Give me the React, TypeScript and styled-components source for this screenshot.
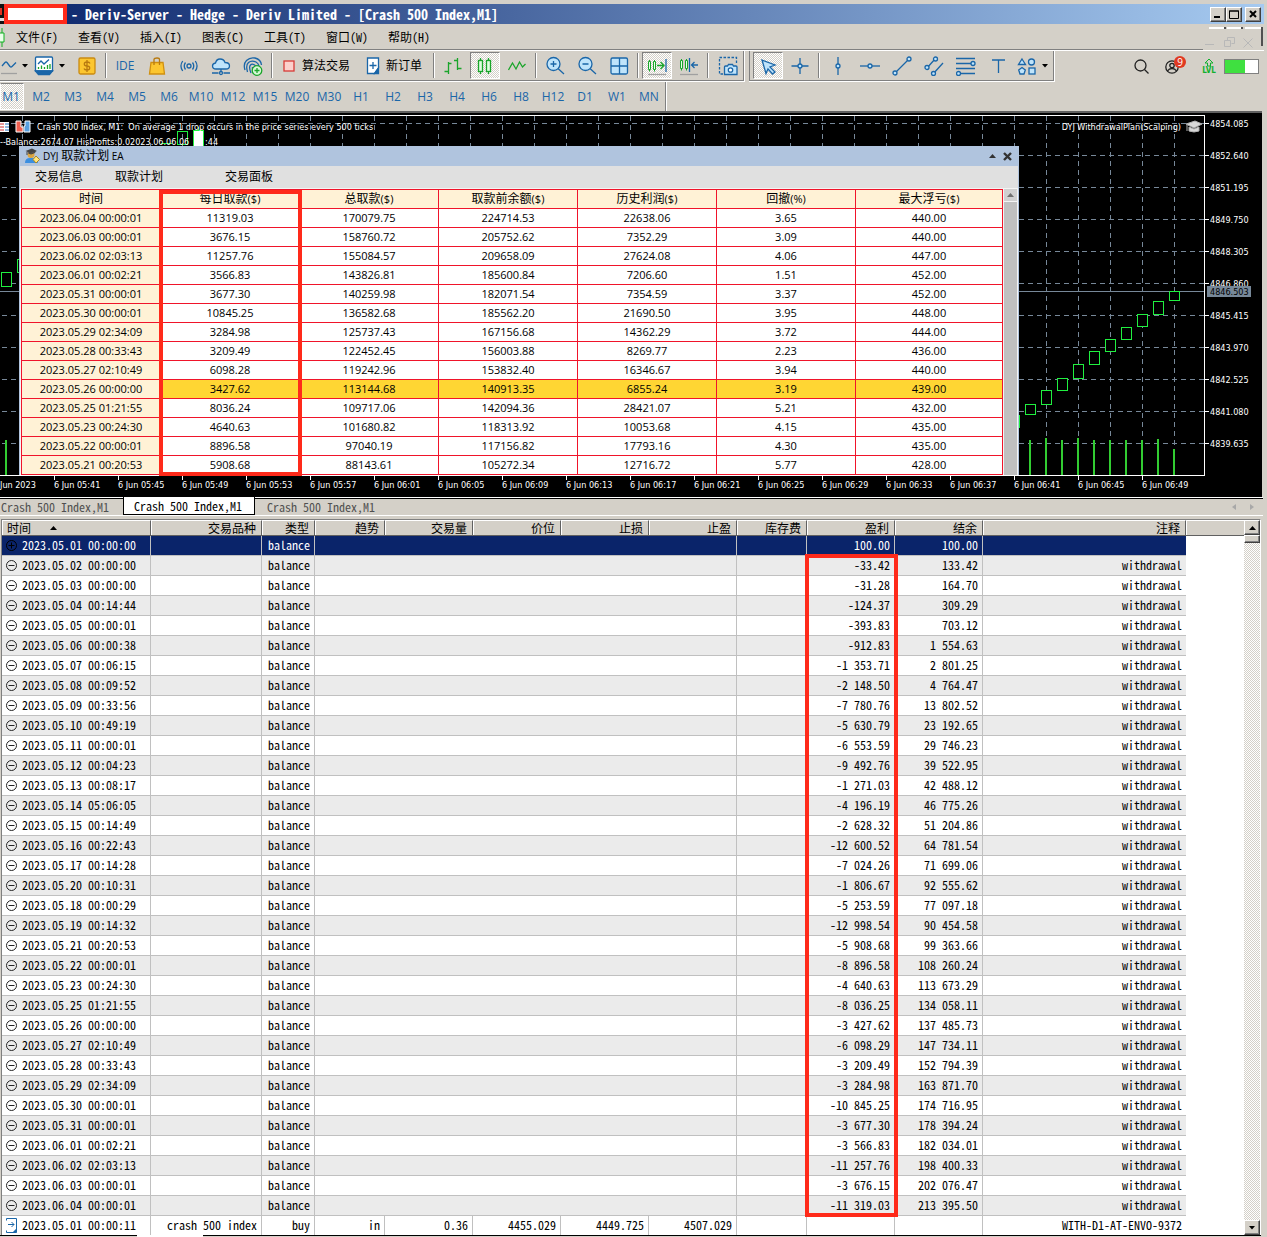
import React from "react";
import styled, { createGlobalStyle, css } from "styled-components";

const face = "#d4d0c8";
const navy = "#0a246a";
const blue = "#1a66a8";
const sky = "#bfe4fb";
const green = "#1aa52a";
const lime = "#20f040";
const slate = "#778899";
const alarm = "#ff2a1a";
const mono = `"Noto Sans Mono CJK SC", "Liberation Mono", "Noto Sans CJK SC", monospace`;
const sans = `"Open Sans", "Noto Sans CJK SC", sans-serif`;
const checker = css`
  background: repeating-conic-gradient(#ffffff 0% 25%, ${face} 0% 50%) 0 0 / 2px 2px;
`;

const GlobalStyle = createGlobalStyle`
  body { margin: 0; background: ${face}; }
  *, *::before, *::after { box-sizing: border-box; }
  button { border: 0; margin: 0; padding: 0; background: none; font: inherit; color: inherit; }
  svg { display: block; flex: none; }
`;

const Window = styled.div`
  padding: 4px 3px 0 0;
  font: 12px/16px ${mono};
  color: #000;
  overflow: hidden;
`;

/* ---------- title bar ---------- */
const TitleBar = styled.header`
  display: flex;
  align-items: center;
  height: 20px;
  background: linear-gradient(90deg, ${navy}, #a6caf0);
  color: #fff;
  padding-right: 3px;
`;
const AccountMask = styled.span`
  width: 63px;
  height: 20px;
  margin-right: 4px;
  border: 4px solid ${alarm};
  background: #fff;
`;
const Title = styled.h1`
  flex: 1;
  margin: 0;
  font: bold 14px/20px ${mono};
  white-space: pre;
`;
const Bevel = styled.button<{ $gap?: boolean }>`
  display: flex;
  align-items: center;
  justify-content: center;
  width: 16px;
  height: 15px;
  margin-left: ${(p) => (p.$gap ? 3 : 0)}px;
  background: ${face};
  border: 1px solid;
  border-color: #fff #404040 #404040 #fff;
  box-shadow: inset -1px -1px #808080;
`;

/* ---------- menu ---------- */
const MenuBar = styled.nav`
  display: flex;
  align-items: center;
  gap: 20px;
  height: 27px;
  border-bottom: 1px solid #fff;
  box-shadow: inset 0 -1px #808080;
`;
const MenuIcon = styled.span`
  width: 5px;
  margin-right: -9px;
`;
const MenuItem = styled.button`
  width: 42px;
  white-space: nowrap;
`;
const ChildControls = styled.div`
  display: flex;
  flex-direction: column;
  align-self: stretch;
  width: 61px;
  margin-left: auto;
  padding-top: 3px;
  background: ${face};
`;
const ChildButtons = styled.div`
  display: flex;
  align-items: flex-end;
  justify-content: space-between;
  width: 50px;
  height: 20px;
  margin-top: -18px;
  padding-left: 2px;
`;

/* ---------- toolbars ---------- */
const ToolRow = styled.div`
  display: flex;
  align-items: center;
  height: 31px;
`;
const Band = styled.div<{ $first?: boolean }>`
  display: flex;
  align-items: center;
  height: 31px;
  border-bottom: 1px solid #fff;
  border-right: 1px solid #fff;
  box-shadow: inset -1px -1px #808080${(p) => (p.$first ? "" : ", inset 1px 0 #808080")};
  padding: 0 ${(p) => (p.$first ? 0 : 2)}px 1px ${(p) => (p.$first ? 0 : 3)}px;
  margin-left: ${(p) => (p.$first ? 0 : 4)}px;
`;
const Tool = styled.button<{ $w?: number; $on?: boolean }>`
  display: flex;
  align-items: center;
  justify-content: center;
  gap: 5px;
  width: ${(p) => p.$w ?? 32}px;
  height: 27px;
  color: ${blue};
  font: 12px/16px ${sans};
  ${(p) =>
    p.$on &&
    css`
      width: 30px;
      margin: 0 1px;
      border: 1px solid;
      border-color: #808080 #fff #fff #808080;
      ${checker}
    `}
`;
const TextTool = styled(Tool)`
  color: #000;
  gap: 6px;
`;
const Split = styled.i`
  width: 2px;
  height: 25px;
  margin: 0 2px;
  border-left: 1px solid #808080;
  border-right: 1px solid #fff;
`;
const Status = styled.div`
  display: flex;
  align-items: center;
  gap: 16px;
  margin-left: auto;
  padding-right: 5px;
`;
const Account = styled.button`
  position: relative;
`;
const Count = styled.b`
  position: absolute;
  left: 9px;
  top: -4px;
  width: 12px;
  height: 12px;
  border-radius: 6px;
  background: #e03a22;
  color: #fff;
  font: 10px/12px ${sans};
  text-align: center;
`;
const Battery = styled.span`
  width: 35px;
  height: 15px;
  margin-left: -8px;
  border: 1px solid #808080;
  background: linear-gradient(90deg, #3fe040 20px, #fff 20px);
`;
const Level = styled.button`
  color: #12b030;
  margin-left: 7px;
  font: bold 8px/8px "DejaVu Sans Condensed", sans-serif;
`;
const Frames = styled.div`
  display: flex;
  align-items: center;
  align-self: flex-start;
  width: 666px;
  height: 29px;
  box-shadow: inset -1px 0 #808080, 1px 0 #fff;
`;
const Frame = styled.button<{ $on?: boolean }>`
  width: 32px;
  height: 27px;
  color: ${blue};
  font: 12px/26px ${sans};
  text-align: center;
  ${(p) =>
    p.$on &&
    css`
      width: 24px;
      margin-right: 1px;
      padding-right: 2px;
      border: 1px solid;
      border-color: #808080 #fff #fff #fff;
      ${checker}
    `}
`;

/* ---------- chart ---------- */
const ChartFrame = styled.section`
  position: relative;
  display: flex;
  height: 386px;
  margin-right: 2px;
  border-top: 2px solid #606060;
  background: #000;
  font-family: "DejaVu Sans Condensed", "DejaVu Sans", sans-serif;
  font-size: 9px;
  overflow: hidden;
`;
const Plot = styled.svg`
  flex: 1 1 0;
  min-width: 0;
  height: 384px;
  font-size: 9px;
`;
const PriceAxis = styled.svg`
  width: 57px;
  height: 384px;
  font-size: 9px;
`;

const Panel = styled.div`
  position: absolute;
  left: 19px;
  top: 33px;
  width: 1000px;
  height: 329px;
  background: #f4f4f4;
  border: 0 solid #b0c4de;
  border-width: 0 1px;
  font: 11px/18px ${sans};
  color: #000;
  overflow: hidden;
`;
const PanelTitle = styled.div`
  display: flex;
  align-items: center;
  height: 20px;
  padding: 0 6px 0 4px;
  gap: 3px;
  background: #b0c4de;
  font: 10px/20px ${sans};
`;
const Han = styled.span`
  font-size: 12px;
`;
const PanelButtons = styled.span`
  display: flex;
  align-items: center;
  gap: 7px;
  margin-left: auto;
`;
const PanelTabs = styled.div`
  display: flex;
  height: 22px;
  padding-left: 15px;
  background: #e0e0e0;
  font-size: 12px;
  line-height: 20px;
`;
const PanelTab = styled.button<{ $w: number }>`
  width: ${(p) => p.$w}px;
  text-align: left;
`;
const PanelBody = styled.div`
  display: flex;
  gap: 1px;
  padding: 1px 1px 0 1px;
`;
const Plan = styled.table`
  flex: 1;
  table-layout: fixed;
  border-collapse: collapse;
  background: #fff;
  th, td {
    height: 19px;
    padding: 0;
    border: 1px solid #f0142a;
    text-align: center;
    line-height: 16px;
  }
  th {
    background: #fff2d6;
    font-weight: normal;
    font-size: 11px;
  }
  thead th {
    font-size: 12px;
    small { font-size: 11px; }
  }
`;
const PlanRow = styled.tr<{ $hot: boolean }>`
  td { background: ${(p) => (p.$hot ? "#ffd633" : "#fff")}; }
`;
const PanelScroll = styled.div`
  width: 13px;
  background: #c0c0c0;
`;
const PanelScrollUp = styled.button`
  display: flex;
  align-items: center;
  justify-content: center;
  width: 13px;
  height: 13px;
  background: #d0d0d0;
  border-bottom: 1px solid #f4f4f4;
`;
const Marker = styled.div<{ $x: number; $y: number; $w: number; $h: number }>`
  position: absolute;
  left: ${(p) => p.$x}px;
  top: ${(p) => p.$y}px;
  width: ${(p) => p.$w}px;
  height: ${(p) => p.$h}px;
  border: 4px solid ${alarm};
  pointer-events: none;
`;

/* ---------- chart tabs ---------- */
const TabStrip = styled.div`
  display: flex;
  height: 19px;
  margin-right: 1px;
  border-bottom: 1px solid #fff;
  background: linear-gradient(#fff 1px, #000 1px, #000 2px, ${face} 2px);
`;
const ChartTab = styled.button<{ $on?: boolean }>`
  height: 18px;
  width: ${(p) => (p.$on ? 132 : 123)}px;
  padding-left: ${(p) => (p.$on ? 10 : 1)}px;
  text-align: left;
  line-height: 20px;
  color: #505050;
  ${(p) =>
    p.$on &&
    css`
      background: #fff;
      color: #000;
      border: 1px solid #000;
      border-top: 0;
      line-height: 18px;
      & + button { padding-left: 12px; }
    `}
`;
const TabArrows = styled.span`
  margin: 6px 7px 0 auto;
`;

/* ---------- history list ---------- */
const ListFrame = styled.section`
  position: relative;
  display: flex;
  margin: 3px 3px 0 1px;
  border-top: 1px solid #808080;
  border-left: 1px solid #808080;
  border-right: 1px solid #fff;
  background: #fff;
`;
const History = styled.table`
  flex: 1;
  min-width: 0;
  table-layout: fixed;
  border-collapse: separate;
  border-spacing: 0;
`;
const HeadCell = styled.th<{ $left?: boolean }>`
  height: 16px;
  padding: ${(p) => (p.$left ? "0 0 0 5px" : "0 5px 0 0")};
  background: ${face};
  border-top: 1px solid #fff;
  border-right: 1px solid #606060;
  border-bottom: 1px solid #606060;
  box-shadow: inset 1px 0 #fff;
  font-weight: normal;
  line-height: 14px;
  text-align: ${(p) => (p.$left ? "left" : "right")};
  &:last-child { border-right: 0; }
`;
const SortMark = styled.svg`
  display: inline-block;
  margin: 0 0 3px 19px;
`;
const Row = styled.tr<{ $tone: "selected" | "odd" | "even" | "last" }>`
  color: ${(p) => (p.$tone === "selected" ? "#fff" : "#000")};
  td {
    height: ${(p) => (p.$tone === "last" ? 19 : 20)}px;
    padding: 0 4px 2px 0;
    text-align: right;
    white-space: pre;
    line-height: 16px;
    background: ${(p) => (p.$tone === "selected" ? navy : p.$tone === "odd" ? "#ebebeb" : "#fff")};
    border-right: 1px solid #c0c0c0;
    border-bottom: ${(p) => (p.$tone === "last" ? 0 : 1)}px solid #c0c0c0;
  }
  td:nth-last-child(2) { border-right: 0; }
  td:last-child { background: #fff; border: 0; }
`;
const Stamp = styled.div`
  display: flex;
  align-items: center;
  gap: 5px;
  height: 16px;
  padding-left: 4px;
  svg { margin-top: 2px; }
`;
const ScrollBar = styled.div`
  display: flex;
  flex-direction: column;
  justify-content: space-between;
  width: 16px;
  ${checker}
`;
const Thumb = styled(Bevel)`
  height: 8px;
`;
const BottomStrip = styled.footer`
  display: flex;
  height: 2px;
  margin-right: 3px;
  border-top: 1px solid #000;
`;
const BottomTab = styled.span`
  width: 66px;
  height: 2px;
  margin: -1px 0 0 137px;
  background: #fff;
`;

/* ---------- drawings ---------- */
const Svg = ({ w = 20, h = 20, children, c = blue }: { w?: number; h?: number; c?: string; children: React.ReactNode }) => (
  <svg width={w} height={h} viewBox={`0 0 ${w} ${h}`} fill="none" stroke={c} strokeWidth="1.3" aria-hidden="true">
    {children}
  </svg>
);
const Caret = ({ c = "#000", up = false }: { c?: string; up?: boolean }) => (
  <svg width="7" height="4" viewBox="0 0 7 4" aria-hidden="true">
    <path d={up ? "M0 4 3.5 0 7 4z" : "M0 0h6L3 3.500z"} fill={c} />
  </svg>
);

const icons: Record<string, React.ReactNode> = {
  line: <Svg w={16} h={20}><path d="M1 10l3-3.500q1-1 2 0l3 4q1 1 2 0l4-4" /><path d="M0 17.500h16" stroke="#a0a0a0" /></Svg>,
  area: (
    <Svg>
      <path d="M2.500 1h15q1 0 1 1v13h-17V2q0-1 1-1z" fill="#fff" />
      <path d="M1.500 15l3 3.500h11l3-3.500z" fill={blue} />
      <path d="M4 8l3-3 3 3 5-4.500" />
      <path d="M4.500 13v-2M7.500 13V9.500M10.500 13v-2M13.500 13V9M16 13V8" stroke={green} />
    </Svg>
  ),
  dollar: (
    <Svg>
      <rect x="2" y="2" width="16" height="16" rx="1.500" fill="#fcc62f" stroke="#c98a12" />
      <path d="M13 7.500q-.5-1.500-3-1.500-2.700 0-2.700 2t2.700 2 2.700 2-2.700 2q-2.500 0-3-1.500M10 4v12" stroke="#b87a10" />
    </Svg>
  ),
  bag: (
    <Svg>
      <path d="M4 6.500h12l1.500 11.500h-15z" fill="#fcc62f" stroke="#d09010" />
      <path d="M7 9V3.500q0-1.500 3-1.500 2.500 0 2.500 1.500V9" stroke="#b87a10" />
    </Svg>
  ),
  signal: (
    <Svg>
      <circle cx="10" cy="10" r="2" />
      <path d="M6.500 6.500q-2.500 3.500 0 7M13.500 6.500q2.500 3.500 0 7M3.700 5q-3.500 5 0 10M16.300 5q3.500 5 0 10" />
    </Svg>
  ),
  cloud: (
    <Svg>
      <path d="M5 13q-3.500 0-3.500-3 0-2.500 3-3Q5.500 3 9 3q4 0 5 3.500 4.500 0 4.500 3.500 0 3-3.500 3z" fill={sky} />
      <path d="M10 13v3M1 17h6.500M12.500 17H19" /><circle cx="10" cy="17" r="1.500" />
    </Svg>
  ),
  finger: (
    <Svg>
      <path d="M2 14Q0 8 3.500 4.500T12 2q6 1.500 6.500 7M4.500 16Q2.500 9 5.500 6.500T13 6q2.500 1.500 3 4M8 17Q5.500 11 7.500 9T13 10M11 17q-2-3-1.500-6" />
      <circle cx="14" cy="14.500" r="4.800" fill="#d8f8d8" stroke={green} /><path d="M14 12v5M11.500 14.500h5" stroke={green} />
    </Svg>
  ),
  stop: <Svg w={14} h={14}><rect x="2" y="2" width="10" height="10" fill="#fcd0cc" stroke="#d83a36" /></Svg>,
  order: (
    <Svg w={14} h={18}>
      <path d="M1.500 1h11v10l-4 5.500h-7z" fill="#fff" /><path d="M12.500 11v5.500h-4z" fill={blue} /><path d="M7 5v7M3.500 8.500h7" />
    </Svg>
  ),
  bars: <Svg c={green}><path d="M5.500 6v12M1.500 15.500h4M5.500 7.500h3M14.500 2v12M11 4.500h3.500M14.500 12.500h4" /></Svg>,
  candles: <Svg c={green}><rect x="3.500" y="4.500" width="4" height="11" fill="#dfffe0" /><rect x="11.500" y="4.500" width="4" height="11" fill="#dfffe0" /><path d="M5.500 2v2.500M5.500 15.500V18M13.500 2v2.500M13.500 15.500V18" /></Svg>,
  zigzag: <Svg c={green}><path d="M1.500 14l4-7 3.500 6 3.500-7 3 5 3-3" /></Svg>,
  zoomIn: <Svg><circle cx="8.500" cy="8" r="6.500" fill={sky} /><path d="M13 12.500l6 5.500M5.500 8h6M8.500 5v6" /></Svg>,
  zoomOut: <Svg><circle cx="8.500" cy="8" r="6.500" fill={sky} /><path d="M13 12.500l6 5.500M5.500 8h6" /></Svg>,
  tiles: <Svg><rect x="2" y="2" width="16.500" height="16" rx="1.500" fill={sky} /><path d="M10.500 2v16M2 10h16.500" /></Svg>,
  scroll: (
    <Svg>
      <g stroke={green} strokeWidth="1"><path d="M1.500 5.500h2v8h-2zM6.500 5.500h2v8h-2zM2.500 4v1.500M2.500 13.500v2M7.500 4v1.500M7.500 13.500v2" fill="#eaffea" /><path d="M10 9.500h7M13.500 6l3.500 3.500-3.500 3.500" strokeWidth="1.300" /></g>
      <path d="M19 3v13" /><path d="M1 18.500h18" stroke="#a0a0a0" />
    </Svg>
  ),
  shift: (
    <Svg>
      <g stroke={green} strokeWidth="1"><path d="M1.500 4.500h2v8h-2zM6.500 4.500h2v8h-2zM2.500 3v1.500M2.500 12.500v2M7.500 3v1.500M7.500 12.500v2" fill="#eaffea" /></g>
      <path d="M10.500 2v14M19 9h-6M15.500 6l-3 3 3 3" /><path d="M1 18.500h18" stroke="#a0a0a0" />
    </Svg>
  ),
  camera: (
    <Svg>
      <path d="M5 18H1.500V1.500h17V7" strokeDasharray="2.500 1.500" />
      <path d="M6.500 18.500v-7.500q0-1 1-1h2l1-1.500h4l1 1.500h2.500q1 0 1 1v7.500z" fill={sky} /><circle cx="12.500" cy="14" r="2.200" fill="#fff" />
    </Svg>
  ),
  cursor: <Svg><path d="M4 4l13 5-5 2 5 5-2.500 2-4.500-5-2 4.500z" fill={sky} /></Svg>,
  cross: <Svg><path d="M10 2v16M1.500 10h17" /><circle cx="10" cy="10" r="2" fill={sky} /></Svg>,
  vline: <Svg><path d="M10 1v18" /><circle cx="10" cy="10" r="2" fill={sky} /></Svg>,
  hline: <Svg><path d="M0 10h20" /><circle cx="10" cy="10" r="2" fill={sky} /></Svg>,
  trend: <Svg><path d="M3 17L17 3" /><circle cx="3" cy="17" r="2" fill={sky} /><circle cx="17" cy="3" r="2" fill={sky} /></Svg>,
  channel: <Svg><path d="M3 12l8-9M9 18L19 7" /><circle cx="3" cy="11.500" r="2" fill={sky} /><circle cx="11.500" cy="3" r="2" fill={sky} /><circle cx="9.500" cy="17.500" r="2" fill={sky} /></Svg>,
  fib: <Svg><path d="M0 2.500h19M0 7.500h17M0 12.500h19M3 17.500h16" /><circle cx="17" cy="7.500" r="2" fill={sky} /><circle cx="2.500" cy="17.500" r="2" fill={sky} /></Svg>,
  text: <Svg><path d="M4 4h13M10.500 4v13" /></Svg>,
  shapes: (
    <Svg>
      <path d="M5 3l3.500 5.500h-7z" fill={sky} /><circle cx="14.500" cy="6" r="3" fill={sky} /><path d="M5 11.500l3.300 2.500-1.300 4H3l-1.300-4z" fill={sky} /><rect x="12" y="12" width="6" height="6" fill={sky} />
    </Svg>
  ),
};

const T = ({ n, label, on, w, drop, c }: { n?: string; label: string; on?: boolean; w?: number; drop?: boolean; c?: string }) => (
  <Tool aria-label={label} aria-pressed={on} $on={on} $w={w}>
    {n ? icons[n] : c}
    {drop && <Caret />}
  </Tool>
);

const menus = [["文件", "F"], ["查看", "V"], ["插入", "I"], ["图表", "C"], ["工具", "T"], ["窗口", "W"], ["帮助", "H"]];
const frames = "M1 M2 M3 M4 M5 M6 M10 M12 M15 M20 M30 H1 H2 H3 H4 H6 H8 H12 D1 W1 MN".split(" ");

const planHead: [string, string][] = [["时间", ""], ["每日取款", "($)"], ["总取款", "($)"], ["取款前余额", "($)"], ["历史利润", "($)"], ["回撤", "(%)"], ["最大浮亏", "($)"]];
const plan = `2023.06.04 00:00:01|11319.03|170079.75|224714.53|22638.06|3.65|440.00
2023.06.03 00:00:01|3676.15|158760.72|205752.62|7352.29|3.09|440.00
2023.06.02 02:03:13|11257.76|155084.57|209658.09|27624.08|4.06|447.00
2023.06.01 00:02:21|3566.83|143826.81|185600.84|7206.60|1.51|452.00
2023.05.31 00:00:01|3677.30|140259.98|182071.54|7354.59|3.37|452.00
2023.05.30 00:00:01|10845.25|136582.68|185562.20|21690.50|3.95|448.00
2023.05.29 02:34:09|3284.98|125737.43|167156.68|14362.29|3.72|444.00
2023.05.28 00:33:43|3209.49|122452.45|156003.88|8269.77|2.23|436.00
2023.05.27 02:10:49|6098.28|119242.96|153832.40|16346.67|3.94|440.00
2023.05.26 00:00:00|3427.62|113144.68|140913.35|6855.24|3.19|439.00
2023.05.25 01:21:55|8036.24|109717.06|142094.36|28421.07|5.21|432.00
2023.05.23 00:24:30|4640.63|101680.82|118313.92|10053.68|4.15|435.00
2023.05.22 00:00:01|8896.58|97040.19|117156.82|17793.16|4.30|435.00
2023.05.21 00:20:53|5908.68|88143.61|105272.34|12716.72|5.77|428.00`.split("\n").map((r) => r.split("|"));

const deals = `05.01 00:00:00|100.00|100.00
05.02 00:00:00|-33.42|133.42
05.03 00:00:00|-31.28|164.70
05.04 00:14:44|-124.37|309.29
05.05 00:00:01|-393.83|703.12
05.06 00:00:38|-912.83|1 554.63
05.07 00:06:15|-1 353.71|2 801.25
05.08 00:09:52|-2 148.50|4 764.47
05.09 00:33:56|-7 780.76|13 802.52
05.10 00:49:19|-5 630.79|23 192.65
05.11 00:00:01|-6 553.59|29 746.23
05.12 00:04:23|-9 492.76|39 522.95
05.13 00:08:17|-1 271.03|42 488.12
05.14 05:06:05|-4 196.19|46 775.26
05.15 00:14:49|-2 628.32|51 204.86
05.16 00:22:43|-12 600.52|64 781.54
05.17 00:14:28|-7 024.26|71 699.06
05.20 00:10:31|-1 806.67|92 555.62
05.18 00:00:29|-5 253.59|77 097.18
05.19 00:14:32|-12 998.54|90 454.58
05.21 00:20:53|-5 908.68|99 363.66
05.22 00:00:01|-8 896.58|108 260.24
05.23 00:24:30|-4 640.63|113 673.29
05.25 01:21:55|-8 036.25|134 058.11
05.26 00:00:00|-3 427.62|137 485.73
05.27 02:10:49|-6 098.29|147 734.11
05.28 00:33:43|-3 209.49|152 794.39
05.29 02:34:09|-3 284.98|163 871.70
05.30 00:00:01|-10 845.25|174 716.95
05.31 00:00:01|-3 677.30|178 394.24
06.01 00:02:21|-3 566.83|182 034.01
06.02 02:03:13|-11 257.76|198 400.33
06.03 00:00:01|-3 676.15|202 076.47
06.04 00:00:01|-11 319.03|213 395.50`.split("\n").map((r) => r.split("|"));

const columns: [string, number | undefined][] = [["时间", 149], ["交易品种", 111], ["类型", 53], ["趋势", 70], ["交易量", 88], ["价位", 88], ["止损", 88], ["止盈", 88], ["库存费", 70], ["盈利", 88], ["结余", 88], ["注释", undefined], ["", 58]];

const prices = ["4854.085", "4852.640", "4851.195", "4849.750", "4848.305", "4846.860", "4845.415", "4843.970", "4842.525", "4841.080", "4839.635"];
const times = ["05:41", "05:45", "05:49", "05:53", "05:57", "06:01", "06:05", "06:09", "06:13", "06:17", "06:21", "06:25", "06:29", "06:33", "06:37", "06:41", "06:45", "06:49"];
const candles = [[404, 11], [390, 15], [378, 13], [364, 15], [351, 14], [339, 13], [327, 13], [314, 13], [301, 14], [291, 10]];
const volumes = [440, 438, 440, 438, 440, 440, 440, 440, 439, 449];

const Chart = () => (
  <ChartFrame>
    <Plot aria-label="Crash 500 Index, M1">
      <g transform="translate(0 -113)" shapeRendering="crispEdges" fill="none">
        <g stroke={slate} strokeDasharray="5 4">
          {prices.map((p, i) => <line key={p} x1="2" x2="100%" y1={123.5 + i * 32} y2={123.5 + i * 32} />)}
          {Array.from({ length: 37 }, (_, i) => <line key={i} x1={22.5 + i * 32} x2={22.5 + i * 32} y1="116" y2="475" />)}
        </g>
        <path d="M0 291.500h1204" stroke={slate} />
        <g stroke={lime}>
          <rect x="1.500" y="272.500" width="10" height="14" fill="#000" />
          <path d="M19 259.500h-1.500v13H19M161 143.500h11M198.500 127v4M1019.500 415v13" />
          <rect x="177.500" y="131.500" width="10" height="13" />
          <rect x="193.500" y="130.500" width="10" height="17" fill="#fff" />
          {candles.map(([y, h], i) => <rect key={y} x={1025.5 + i * 16} y={y + 0.5} width="10" height={h - 1} fill="#000" />)}
        </g>
        <g fill="#32cd32">
          <rect x="5" y="440" width="2" height="35" />
          {volumes.map((y, i) => <rect key={i} x={1029 + i * 16} y={y} width="2" height={475 - y} />)}
        </g>
        <path d="M0 115.500h1205M0 475.500h1205M1204.500 115v361" stroke="#fff" />
        {times.map((t, i) => <path key={t} d={`M${54.5 + i * 64} 476v4`} stroke="#fff" />)}
      </g>
      <g transform="translate(0 -113)" fill="#fff">
        <text x="0" y="488">Jun 2023</text>
        {times.map((t, i) => <text key={t} x={54 + i * 64} y="488">6 Jun {t}</text>)}
        <text x="37" y="130" xmlSpace="preserve">Crash 500 Index, M1:  On average 1 drop occurs in the price series every 500 ticks</text>
        <text x="0" y="145">--Balance:2674.07 HisProfits:0.02023.06.06 06</text>
        <text x="205" y="145">:44</text>
        <text x="1181" y="130" textAnchor="end">DYJ WithdrawalPlan(Scalping)</text>
        <rect x="0" y="122" width="9" height="10" />
        <path d="M0 124h4M0 127h4M0 130h4" stroke="#d03030" />
        <path d="M5 124h4M5 127h4M5 130h4" stroke="#2070c0" />
        <path d="M16 121h5v6h2v5h-7z" fill="#f06050" stroke="#fff" />
        <path d="M25 121h5v11h-6v-6h1z" fill="#58a0e0" stroke="#fff" />
        <path d="M1186 124l9-3 7 3-8 4zM1189 127l5 2 5-2v4q-5 2-10 0zM1187 125v6" fill="#d8d8d8" stroke="#b0b0b0" />
      </g>
    </Plot>
    <PriceAxis aria-label="Price scale">
      <g transform="translate(-1205 -113)" fill="#fff">
        {prices.map((p, i) => (
          <g key={p}>
            <rect x="1205" y={123 + i * 32} width="4" height="1" />
            <text x="1210" y={127 + i * 32}>{p}</text>
          </g>
        ))}
        <rect x="1207" y="286" width="44" height="11" fill={slate} />
        <text x="1210" y="295" fill="#000">4846.503</text>
      </g>
    </PriceAxis>
    <Panel>
      <PanelTitle>
        <svg width="16" height="16" viewBox="0 0 16 16" aria-hidden="true">
          <path d="M1 15q0-5 5-5h3q5 0 5 5z" fill="#3b8fe0" />
          <circle cx="7" cy="6.500" r="3.500" fill="#d9a441" />
          <path d="M1.500 3L8 .5 13 3 7 5.500z" fill="#444" /><path d="M3 4v3M4.500 5l2.500 1 4-1.500V3z" stroke="#444" fill="#555" />
          <path d="M12 8l3.500 3.500L12 15l-3-3.500z" fill="#ffe680" stroke="#b08820" />
        </svg>
        <span>DYJ <Han>取款计划</Han> EA</span>
        <PanelButtons>
          <button aria-label="收起"><Caret up c="#333" /></button>
          <button aria-label="关闭">
            <svg width="9" height="9" viewBox="0 0 9 9" aria-hidden="true"><path d="M1 1l7 7M8 1L1 8" stroke="#333" strokeWidth="2.400" /></svg>
          </button>
        </PanelButtons>
      </PanelTitle>
      <PanelTabs>
        <PanelTab $w={80}>交易信息</PanelTab>
        <PanelTab $w={110}>取款计划</PanelTab>
        <PanelTab $w={60}>交易面板</PanelTab>
      </PanelTabs>
      <PanelBody>
        <Plan>
          <colgroup>{planHead.map(([h], i) => <col key={h} width={i < 6 ? 139 : undefined} />)}</colgroup>
          <thead><tr>{planHead.map(([h, u]) => <th key={h} scope="col">{h}<small>{u}</small></th>)}</tr></thead>
          <tbody>
            {plan.map(([d, ...rest]) => (
              <PlanRow key={d} $hot={d.startsWith("2023.05.26")}>
                <th scope="row">{d}</th>
                {rest.map((v, i) => <td key={i}>{v}</td>)}
              </PlanRow>
            ))}
          </tbody>
        </Plan>
        <PanelScroll><PanelScrollUp aria-label="向上滚动"><Caret up c="#707070" /></PanelScrollUp></PanelScroll>
      </PanelBody>
    </Panel>
    <Marker $x={159} $y={77} $w={143} $h={286} />
  </ChartFrame>
);

const EntryIcon = ({ kind }: { kind: "plus" | "minus" | "deal" }) =>
  kind === "deal" ? (
    <svg width="11" height="15" viewBox="0 0 11 15" fill="none" stroke={blue} aria-hidden="true">
      <path d="M.5 2.500v-2h10v11l-3 3h-7v-2M2 6.500h6M5.500 4L8 6.500 5.500 9" /><path d="M7 14.500l3.500-3.500v3.500z" fill={blue} />
    </svg>
  ) : (
    <svg width="11" height="11" viewBox="0 0 11 11" fill="none" stroke={kind === "plus" ? "#000" : "#222"} aria-hidden="true">
      <circle cx="5.500" cy="5.500" r="5" /><path d={kind === "plus" ? "M2.500 5.500h6M5.500 2.500v6" : "M2.500 5.500h6"} />
    </svg>
  );

const HistoryList = () => (
  <ListFrame>
    <History>
      <colgroup>{columns.map(([c, w]) => <col key={c} width={w} />)}</colgroup>
      <thead>
        <tr>
          {columns.map(([c], i) => (
            <HeadCell key={c} scope="col" $left={i === 0}>
              {c}
              {i === 0 && <SortMark width="7" height="4" viewBox="0 0 7 4" aria-hidden="true"><path d="M0 4L3.500 0 7 4z" /></SortMark>}
            </HeadCell>
          ))}
        </tr>
      </thead>
      <tbody>
        {deals.map(([d, profit, total], i) => (
          <Row key={d} $tone={i === 0 ? "selected" : i % 2 ? "odd" : "even"}>
            <td><Stamp><EntryIcon kind={i ? "minus" : "plus"} />2023.{d}</Stamp></td>
            <td />
            <td>balance</td>
            <td colSpan={5} />
            <td />
            <td>{profit}</td>
            <td>{total}</td>
            <td>{i ? "withdrawal" : ""}</td>
            <td />
          </Row>
        ))}
        <Row $tone="last">
          <td><Stamp><EntryIcon kind="deal" />2023.05.01 00:00:11</Stamp></td>
          <td>crash 500 index</td>
          <td>buy</td>
          <td>in</td>
          <td>0.36</td>
          <td>4455.029</td>
          <td>4449.725</td>
          <td>4507.029</td>
          <td /><td /><td />
          <td>WITH-D1-AT-ENVO-9372</td>
          <td />
        </Row>
      </tbody>
    </History>
    <ScrollBar>
      <div>
        <Bevel aria-label="向上滚动"><Caret up /></Bevel>
        <Thumb aria-label="滚动块" />
      </div>
      <Bevel aria-label="向下滚动"><Caret /></Bevel>
    </ScrollBar>
    <Marker $x={803} $y={34} $w={93} $h={663} />
  </ListFrame>
);

export default function App() {
  return (
    <Window>
      <GlobalStyle />
      <TitleBar>
        <svg width="4" height="20" viewBox="0 0 4 20" aria-hidden="true"><path d="M0 0h4v20H0z" fill="#111" /><path d="M0 4h2v7H0z" fill="#e03020" /><path d="M0 14h4v3H0z" fill="#ddd" /></svg>
        <AccountMask />
        <Title>- Deriv-Server - Hedge - Deriv Limited - [Crash 500 Index,M1]</Title>
        <Bevel aria-label="最小化"><svg width="10" height="9" viewBox="0 0 10 9"><path d="M1 6h6v2H1z" /></svg></Bevel>
        <Bevel aria-label="最大化"><svg width="10" height="9" viewBox="0 0 10 9"><path d="M.5 1h9v7.500h-9zM0 1h10" fill="none" stroke="#000" /></svg></Bevel>
        <Bevel $gap aria-label="关闭"><svg width="8" height="8" viewBox="0 0 8 8"><path d="M1 1l6 6M7 1L1 7" stroke="#000" strokeWidth="2" /></svg></Bevel>
      </TitleBar>
      <MenuBar>
        <MenuIcon><svg width="5" height="19" viewBox="0 0 5 19" fill="none" stroke="#10b020"><path d="M2 0v19" /><path d="M-2 5h6v9h-6z" fill="#eaffea" /></svg></MenuIcon>
        {menus.map(([m, k]) => <MenuItem key={k}>{m}({k})</MenuItem>)}
        <ChildControls>
          <svg width="61" height="19" viewBox="0 0 61 19" fill="none" strokeWidth="2" shapeRendering="crispEdges" aria-hidden="true">
            <path d="M6 1h15M24 1h14M42 1h16" stroke="#fff" />
            <path d="M21 1h2M38 1h2M59 0v19" stroke="#505050" />
          </svg>
          <ChildButtons>
            <button aria-label="最小化图表"><svg width="10" height="4" stroke="#b8b8b8"><path d="M0 .5h9" /></svg></button>
            <button aria-label="还原图表"><svg width="11" height="11" stroke="#b8b8b8" fill="none"><path d="M3.500 3.500v-3h7v6h-3M.5 3.500h6v6h-6z" /></svg></button>
            <button aria-label="关闭图表"><svg width="10" height="10" stroke="#b8b8b8"><path d="M.5.5l9 9M9.500.5l-9 9" /></svg></button>
          </ChildButtons>
        </ChildControls>
      </MenuBar>
      <ToolRow>
        <Band $first>
          <T n="line" label="线" w={29} drop />
          <T n="area" label="图表类型" w={42} drop />
          <T n="dollar" label="报价" />
          <Split />
          <T label="IDE" c="IDE" />
          <T n="bag" label="市场" />
          <T n="signal" label="信号" />
          <T n="cloud" label="VPS" />
          <T n="finger" label="指纹" />
          <Split />
          <TextTool $w={82}>{icons.stop}算法交易</TextTool>
          <TextTool $w={74}>{icons.order}新订单</TextTool>
          <Split />
          <T n="bars" label="柱状图" />
          <T n="candles" label="蜡烛图" on />
          <T n="zigzag" label="折线图" />
          <Split />
          <T n="zoomIn" label="放大" />
          <T n="zoomOut" label="缩小" />
          <T n="tiles" label="平铺" />
          <Split />
          <T n="scroll" label="自动滚动" on />
          <T n="shift" label="图表平移" />
          <Split />
          <T n="camera" label="截图" w={33} />
        </Band>
        <Band>
          <T n="cursor" label="光标" on />
          <T n="cross" label="十字线" />
          <Split />
          <T n="vline" label="垂直线" />
          <T n="hline" label="水平线" />
          <T n="trend" label="趋势线" />
          <T n="channel" label="通道" />
          <T n="fib" label="斐波那契" />
          <T n="text" label="文本" />
          <T n="shapes" label="形状" w={38} drop />
        </Band>
        <Status>
          <button aria-label="搜索"><Svg w={15} h={15} c="#222"><circle cx="6.500" cy="6.500" r="5.500" /><path d="M10.500 10.500l4 4" /></Svg></button>
          <Account aria-label="账户">
            <Svg w={14} h={14} c="#222"><circle cx="7" cy="7" r="6.200" /><circle cx="7" cy="5.500" r="2.200" /><path d="M2.500 11q1.500-2.500 4.500-2.500t4.500 2.500" /></Svg>
            <Count>9</Count>
          </Account>
          <Level aria-label="LVL">
            <svg width="14" height="9" viewBox="0 0 14 9" fill="none" stroke="#12b030"><path d="M5.500 8V5H3l4-4 4 4H8.500v3z" /></svg>
            LVL
          </Level>
          <Battery />
        </Status>
      </ToolRow>
      <Frames>
        {frames.map((f, i) => <Frame key={f} $on={i === 0}>{f}</Frame>)}
      </Frames>
      <Chart />
      <TabStrip>
        <ChartTab>Crash 500 Index,M1</ChartTab>
        <ChartTab $on>Crash 500 Index,M1</ChartTab>
        <ChartTab>Crash 500 Index,M1</ChartTab>
        <TabArrows><svg width="24" height="8" viewBox="0 0 24 8" fill="#a8a8a8" aria-hidden="true"><path d="M4 1v6L0 4zM18 1v6l4-3z" /></svg></TabArrows>
      </TabStrip>
      <HistoryList />
      <BottomStrip><BottomTab /></BottomStrip>
    </Window>
  );
}
